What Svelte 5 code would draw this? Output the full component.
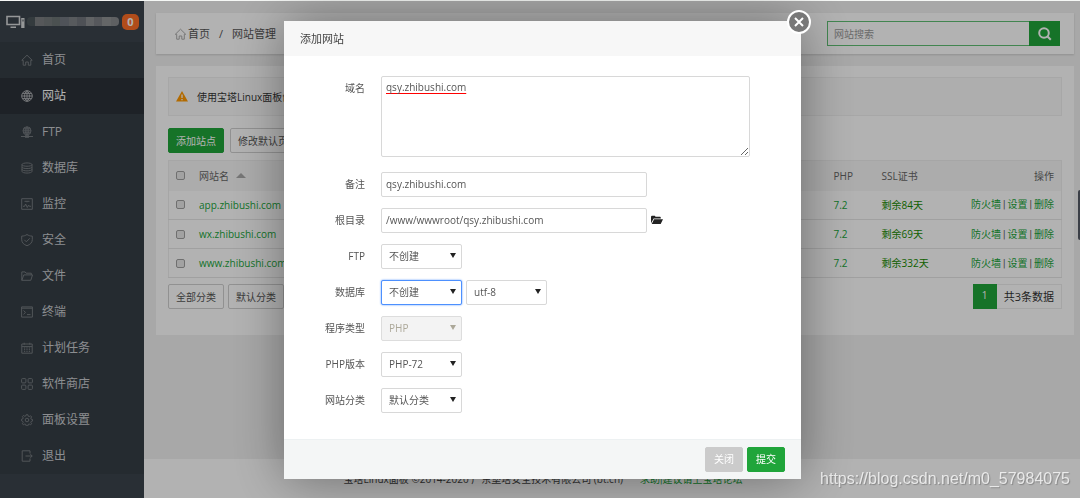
<script lang="ts">
  interface MenuItem {
    name: string;
    icon: string;
    active?: boolean;
  }

  const menu: MenuItem[] = [
    { name: '首页', icon: 'home' },
    { name: '网站', icon: 'site', active: true },
    { name: 'FTP', icon: 'ftp' },
    { name: '数据库', icon: 'database' },
    { name: '监控', icon: 'monitor' },
    { name: '安全', icon: 'shield' },
    { name: '文件', icon: 'folder' },
    { name: '终端', icon: 'terminal' },
    { name: '计划任务', icon: 'calendar' },
    { name: '软件商店', icon: 'store' },
    { name: '面板设置', icon: 'gear' },
    { name: '退出', icon: 'exit' },
  ];

  const icons: Record<string, string> = {
    home: 'M.8 6.3 6 1.2l5.2 5.1H9.8v4.9H7.3V8H4.7v3.2H2.2V6.3z',
    site: 'M6 .7a5.3 5.3 0 1 0 0 10.6A5.3 5.3 0 0 0 6 .7zM6 .7v10.6M.7 6h10.6M1.5 3.4h9M1.5 8.6h9M6 .7C2.7 3 2.7 9 6 11.3 9.3 9 9.3 3 6 .7',
    ftp: 'M6 .8a4 4 0 1 0 0 8 4 4 0 0 0 0-8zM6 .8v8M2 4.8h8M2.6 2.8h6.8M2.6 6.8h6.8M6 .8c-2.3 2-2.3 6 0 8 2.3-2 2.3-6 0-8M0 10.5h12M4 11.3h4M4 9.7h4',
    database: 'M1 2.6C1 .4 11 .4 11 2.6S1 4.8 1 2.6v6.8c0 2.2 10 2.2 10 0V2.6M1 5c0 2.1 10 2.1 10 0M1 7.3c0 2.1 10 2.1 10 0',
    monitor: 'M.7.7h10.6v10.6H.7zM3.5 3.3h5M6 3.3v1M2 8.3h1.6l1-2.3 1.7 3.5 1.3-2.4.8 1.2H10',
    shield: 'M6 .5c1.6 1.1 3.2 1.6 5.3 1.6v3.6c0 2.9-2.1 4.9-5.3 6-3.2-1.1-5.3-3.1-5.3-6V2.1C2.8 2.1 4.4 1.6 6 .5zM3.3 5.8l2 2 3.5-3.5',
    folder: 'M.8 10.3V1.9h3.3l1 1.3h5.2v1.7M.8 10.3l2-5.4h8.7l-1.7 5.4z',
    terminal: 'M.6.9h10.8v10.2H.6zM.6 2.2h10.8M2.5 4.5l2 1.9-2 1.9M6 8.6h3.5',
    calendar: 'M.8 2h10.4v9.2H.8zM.8 4.6h10.4M3.2.7v2M8.8.7v2M3 6h1.2M5.4 6h1.2M7.8 6H9M3 7.7h1.2M5.4 7.7h1.2M7.8 7.7H9M3 9.4h1.2M5.4 9.4h1.2M7.8 9.4H9',
    store: 'M1.5.6H4q.9 0 .9.9V4q0 .9-.9.9H1.5Q.6 4.9.6 4V1.5q0-.9.9-.9zM8 .6h2.5q.9 0 .9.9V4q0 .9-.9.9H8q-.9 0-.9-.9V1.5Q7.1.6 8 .6zM1.5 7.1H4q.9 0 .9.9v2.5q0 .9-.9.9H1.5q-.9 0-.9-.9V8q0-.9.9-.9zM8 7.1h2.5q.9 0 .9.9v2.5q0 .9-.9.9H8q-.9 0-.9-.9V8q0-.9.9-.9z',
    gear: 'M5.2.7h1.6l.4 1.5 1 .4 1.4-.8 1 1-.8 1.4.4 1 1.4.4v1.4l-1.4.4-.4 1 .8 1.4-1 1-1.4-.8-1 .4-.4 1.5H5.2l-.4-1.5-1-.4-1.4.8-1-1 .8-1.4-.4-1L.5 6.7V5.3l1.3-.4.4-1-.8-1.4 1-1 1.4.8 1-.4zM6 4.2a1.8 1.8 0 1 0 0 3.6 1.8 1.8 0 0 0 0-3.6z',
    exit: 'M9 3.5V.8H1.2v10.4H9V8.5M4.5 6h6.7M9.3 4.2 11.2 6 9.3 7.8',
  };

  const mosaic = ['#4b5559', '#7c7f82', '#747a7b', '#6c7575', '#727880', '#7d8286', '#70757b', '#8c8e91', '#7b7f84', '#909294', '#878a8d'];

  const sites = [
    { name: 'app.zhibushi.com', php: '7.2', days: 84 },
    { name: 'wx.zhibushi.com', php: '7.2', days: 69 },
    { name: 'www.zhibushi.com', php: '7.2', days: 332 },
  ];

  let domain = $state('qsy.zhibushi.com');
  let remark = $state('qsy.zhibushi.com');
  let path = $state('/www/wwwroot/qsy.zhibushi.com');
</script>

{#snippet dropdown(id: string, options: string[], disabled = false, focused = false, label = '')}
  <span class="select" class:disabled class:focused>
    <select {id} {disabled} aria-label={label || undefined}>
      {#each options as option}
        <option>{option}</option>
      {/each}
    </select>
  </span>
{/snippet}

<div class="page">
  <aside class="sidebar">
    <div class="server">
      <svg class="server-icon" width="19" height="14" viewBox="0 0 19 14">
        <path d="M1 1.5h12.5v8H1z" fill="none" stroke="#d6d8da" stroke-width="1.6" />
        <path d="M4.5 11.6H10V13H4.5zM15.2 3h3.3v10h-3.3z" fill="#d6d8da" />
        <path d="M17 4.5v2" stroke="#3c444d" />
      </svg>
      <span class="mosaic">
        {#each mosaic as color}
          <i style:background={color}></i>
        {/each}
      </span>
      <span class="badge">0</span>
    </div>
    <nav class="menu">
      {#each menu as item (item.name)}
        <a href="#{item.icon}" class="menu-item" class:active={item.active}>
          <svg width="12" height="12" viewBox="0 0 12 12"><path d={icons[item.icon]} /></svg>
          {item.name}
        </a>
      {/each}
    </nav>
  </aside>

  <div class="main">
    <header class="topbar card">
      <div class="crumbs">
        <a href="#home" class="crumb-home">
          <svg width="13" height="12" viewBox="0 0 12 12"><path d={icons.home} /></svg>首页</a>
        <span>/</span>
        <span>网站管理</span>
      </div>
      <form class="search">
        <input type="text" placeholder="网站搜索" aria-label="网站搜索" />
        <button type="button" aria-label="搜索">
          <svg width="14" height="14" viewBox="0 0 14 14">
            <circle cx="6" cy="6" r="4.8" />
            <path d="m9.5 9.5 3.3 3.3" />
          </svg>
        </button>
      </form>
    </header>

    <section class="content card">
      <div class="notice">
        <svg width="12" height="11" viewBox="0 0 12 11">
          <path d="M6 0 12 10.5H0z" fill="#ff9900" />
          <path d="M6 3.5V7M6 8v1.3" stroke="#fff" stroke-width="1.3" />
        </svg>
        使用宝塔Linux面板创建站点
      </div>

      <div class="toolbar">
        <button type="button" class="btn primary">添加站点</button>
        <button type="button" class="btn">修改默认页</button>
      </div>

      <table class="sites">
        <thead>
          <tr>
            <th class="check"><input type="checkbox" aria-label="全选" /></th>
            <th>网站名 <i class="sort"></i></th>
            <th class="php">PHP</th>
            <th class="ssl">SSL证书</th>
            <th class="ops">操作</th>
          </tr>
        </thead>
        <tbody>
          {#each sites as site (site.name)}
            <tr>
              <td class="check"><input type="checkbox" aria-label={site.name} /></td>
              <td><a href="#site">{site.name}</a></td>
              <td><a href="#php">{site.php}</a></td>
              <td><a href="#ssl" class="ssl-days">剩余{site.days}天</a></td>
              <td class="ops">
                <a href="#firewall">防火墙</a><span class="sep">|</span><a href="#settings">设置</a><span class="sep">|</span><a href="#delete">删除</a>
              </td>
            </tr>
          {/each}
        </tbody>
      </table>

      <div class="table-foot">
        <button type="button" class="btn">全部分类</button>
        <button type="button" class="btn">默认分类</button>
        <div class="pager">
          <span class="current">1</span>
          <span class="total">共3条数据</span>
        </div>
      </div>
    </section>

    <footer class="footer">
      <span>宝塔Linux面板 ©2014-2020 广东堡塔安全技术有限公司 (bt.cn)</span>
      <a href="#forum">求助<span class="bar">|</span>建议请上宝塔论坛</a>
    </footer>
  </div>
</div>

<div class="side-tab"></div>

<div class="overlay">
  <div class="modal" role="dialog" aria-labelledby="modal-title">
    <h2 id="modal-title" class="modal-title">添加网站</h2>
    <button type="button" class="close" aria-label="关闭窗口">
      <svg width="10" height="10" viewBox="0 0 10 10"><path d="m1 1 8 8M9 1 1 9" /></svg>
    </button>

    <form class="form">
      <div class="row tall">
        <label for="domain">域名</label>
        <textarea id="domain" spellcheck="false" bind:value={domain}></textarea>
      </div>
      <div class="row">
        <label for="remark">备注</label>
        <input id="remark" type="text" bind:value={remark} />
      </div>
      <div class="row">
        <label for="path">根目录</label>
        <input id="path" type="text" bind:value={path} />
        <button type="button" class="browse" aria-label="选择目录">
          <svg width="12" height="10" viewBox="0 0 12 10">
            <path d="M0 8.2V1.5L.8.7h3l.8 1h4.6l.6.7v1H2.7zM3.1 4.2H12L9.7 9H.7z" />
          </svg>
        </button>
      </div>
      <div class="row">
        <label for="ftp">FTP</label>
        {@render dropdown('ftp', ['不创建', '创建'])}
      </div>
      <div class="row">
        <label for="database">数据库</label>
        {@render dropdown('database', ['不创建', 'MySQL'], false, true)}
        {@render dropdown('charset', ['utf-8', 'gbk', 'big5'], false, false, '编码')}
      </div>
      <div class="row">
        <label for="type">程序类型</label>
        {@render dropdown('type', ['PHP'], true)}
      </div>
      <div class="row">
        <label for="version">PHP版本</label>
        {@render dropdown('version', ['PHP-72', '纯静态'])}
      </div>
      <div class="row">
        <label for="category">网站分类</label>
        {@render dropdown('category', ['默认分类'])}
      </div>
    </form>

    <div class="modal-foot">
      <button type="button" class="btn muted">关闭</button>
      <button type="button" class="btn primary">提交</button>
    </div>
  </div>
</div>

<div class="watermark">https://blog.csdn.net/m0_57984075</div>

<style>
  :global(body) {
    font: 10px/16px 'Open Sans', 'Noto Sans CJK SC', sans-serif;
    color: #555;
    background: #f1f1f1;
  }

  * {
    box-sizing: border-box;
  }

  a {
    color: #20a53a;
    text-decoration: none;
  }

  button,
  input,
  select,
  textarea {
    margin: 0;
    font: inherit;
    color: inherit;
    outline: none;
  }

  .page {
    display: flex;
    min-height: 100vh;
    border-top: 1px solid #f5f7f5;
  }

  /* sidebar */
  .sidebar {
    flex: 0 0 144px;
    background: #3c444d;
  }

  .server {
    display: flex;
    align-items: center;
    height: 41px;
    padding: 0 5px 0 6px;
  }

  .server-icon {
    flex: none;
  }

  .mosaic {
    display: flex;
    flex: 1;
    height: 9px;
    margin: 0 3px 0 2px;
    border-radius: 4px;
    overflow: hidden;
  }

  .mosaic i {
    flex: 1;
  }

  .badge {
    width: 17px;
    border-radius: 5px;
    background: #fc6d26;
    color: #fff;
    font-size: 11px;
    font-weight: 700;
    text-align: center;
  }

  .menu {
    background: #363e45;
  }

  .menu-item {
    display: flex;
    align-items: center;
    gap: 9px;
    height: 36px;
    padding-left: 21px;
    font-size: 12px;
    color: #c9ccd0;
  }

  .menu-item svg {
    fill: none;
    stroke: #747a7f;
  }

  .menu-item.active {
    background: #2c3138;
    color: #fff;
  }

  .menu-item.active svg {
    stroke: #a9acaf;
  }

  /* page body */
  .main {
    flex: 1;
    display: flex;
    flex-direction: column;
  }

  .card {
    margin: 12px 6px 0 12px;
    background: #fff;
  }

  .topbar {
    display: flex;
    align-items: center;
    justify-content: space-between;
    height: 41px;
    padding: 0 14px 0 18px;
    box-shadow: 0 1px 2px rgba(0, 0, 0, 0.15);
  }

  .crumbs {
    display: flex;
    gap: 9px;
    font-size: 11px;
  }

  .crumb-home {
    display: flex;
    align-items: center;
    gap: 1px;
    color: inherit;
  }

  .crumb-home svg {
    fill: none;
    stroke: #aaa;
  }

  .search {
    display: flex;
  }

  .search input {
    width: 202px;
    height: 25px;
    padding: 0 6px;
    border: 1px solid #5fbf73;
    border-right: 0;
    background: #fff;
  }

  .search input::placeholder {
    color: #999;
  }

  .search button {
    display: grid;
    place-items: center;
    width: 31px;
    padding: 0;
    border: 0;
    background: #20a53a;
  }

  .search svg {
    fill: none;
    stroke: #fff;
    stroke-width: 2;
  }

  .content {
    padding: 11px 12px 26px;
  }

  .notice {
    display: flex;
    align-items: center;
    gap: 9px;
    height: 39px;
    padding-left: 7px;
    border: 1px solid #f0f0f0;
    background: #fafafa;
    color: #333;
  }

  .toolbar {
    display: flex;
    gap: 6px;
    margin: 12px 0 7px;
  }

  .btn {
    height: 25px;
    padding: 0 7px;
    border: 1px solid #d0d0d0;
    border-radius: 2px;
    background: #fff;
    white-space: nowrap;
  }

  .btn.primary {
    border-color: #20a53a;
    background: #20a53a;
    color: #fff;
  }

  .btn.muted {
    border-color: #cbcbcb;
    background: #cbcbcb;
    color: #fff;
  }

  .sites {
    width: 100%;
    border: 1px solid #eee;
    border-collapse: collapse;
  }

  .sites th,
  .sites td {
    height: 29px;
    padding: 0 7px;
    border-bottom: 1px solid #e6e6e6;
    font-weight: 400;
    text-align: left;
  }

  .sites th {
    height: 30px;
    background: #f6f6f6;
    border-bottom: 0;
    color: #666;
  }

  .sites .check {
    width: 23px;
  }

  .sites .php {
    width: 48px;
  }

  .sites .ssl {
    width: 72px;
  }

  .sites .ops {
    width: 115px;
    text-align: right;
    white-space: nowrap;
  }

  .sep,
  .bar {
    font-family: Roboto, sans-serif;
  }

  .sep {
    padding: 0 2px;
  }

  .sites .ssl-days {
    color: #168a00;
  }

  .check input {
    display: block;
    appearance: none;
    width: 9px;
    height: 9px;
    border: 1px solid #a0a0a0;
    border-radius: 2px;
    background: #e8e8e8;
  }

  .sort {
    display: inline-block;
    margin: 0 0 2px 4px;
    border: solid transparent;
    border-width: 0 5px 5px;
    border-bottom-color: #aaa;
  }

  .table-foot {
    display: flex;
    gap: 4px;
    margin-top: 6px;
  }

  .pager {
    display: flex;
    margin-left: auto;
    line-height: 23px;
    color: #333;
  }

  .pager .current {
    width: 24px;
    background: #20a53a;
    color: #fff;
    text-align: center;
  }

  .pager .total {
    padding: 0 7px;
    border: 1px solid #ececec;
    border-left: 0;
    font-size: 11px;
  }

  .footer {
    display: flex;
    justify-content: center;
    gap: 17px;
    height: 39px;
    margin-top: auto;
    padding-right: 138px;
    background: #fff;
    line-height: 40px;
    color: #444;
  }

  .side-tab {
    position: fixed;
    top: 190px;
    right: 0;
    width: 2px;
    height: 50px;
    border-radius: 2px 0 0 2px;
    background: #555b66;
  }

  /* dialog */
  .overlay {
    position: fixed;
    inset: 1px 0 0;
    display: flex;
    align-items: center;
    justify-content: center;
    padding-left: 5px;
    background: rgba(0, 0, 0, 0.3);
  }

  .modal {
    position: relative;
    width: 517px;
    background: #fff;
    box-shadow: 1px 1px 50px rgba(0, 0, 0, 0.4);
  }

  .modal-title {
    margin: 0;
    padding: 0 16px;
    background: #f7f7f7;
    font-size: 11px;
    font-weight: 400;
    line-height: 35px;
    color: #444;
  }

  .close {
    position: absolute;
    top: -11px;
    right: -10px;
    display: grid;
    place-items: center;
    width: 24px;
    height: 24px;
    padding: 0;
    border: 2px solid #fff;
    border-radius: 50%;
    background: #787878;
  }

  .close svg {
    fill: none;
    stroke: #fff;
    stroke-width: 2;
  }

  .form {
    display: flex;
    flex-direction: column;
    gap: 11px;
    padding: 20px 51px 26px 0;
  }

  .row {
    display: flex;
    align-items: center;
    gap: 4px;
  }

  .row.tall {
    align-items: flex-start;
    padding-bottom: 4px;
  }

  .row label {
    width: 81px;
    margin-right: 12px;
    line-height: 25px;
    text-align: right;
  }

  .row textarea {
    flex: 1;
    height: 81px;
    padding: 2px 4px;
    border: 1px solid #d8d8d8;
    border-radius: 2px;
    text-decoration: underline solid #f00 1px;
    text-decoration-skip-ink: none;
    text-underline-offset: 2px;
  }

  .row input {
    width: 266px;
    height: 25px;
    padding: 0 4px;
    border: 1px solid #d8d8d8;
    border-radius: 2px;
  }

  .browse {
    display: flex;
    padding: 0;
    border: 0;
    background: none;
  }

  .browse svg {
    fill: #222;
  }

  .select {
    display: grid;
    align-items: center;
    width: 81px;
  }

  .select select {
    grid-area: 1 / 1;
    height: 25px;
    padding: 0 7px;
    appearance: none;
    border: 1px solid #d8d8d8;
    border-radius: 2px;
    background: #fff;
    opacity: 1;
  }

  .select::after {
    content: '';
    grid-area: 1 / 1;
    justify-self: end;
    margin: 0 6px 2px 0;
    border: solid transparent;
    border-width: 5px 3px 0;
    border-top-color: #222;
    pointer-events: none;
  }

  .select.focused select {
    border-color: #4d90fe;
    box-shadow: 0 0 2px #4d90fe;
  }

  .select.disabled select {
    border-color: #ddd;
    background: #f3f3f3;
    color: #aca899;
  }

  .select.disabled::after {
    border-top-color: #aca899;
  }

  .modal-foot {
    display: flex;
    justify-content: flex-end;
    gap: 4px;
    padding: 7px 16px;
    border-top: 1px solid #edf1f2;
    background: #f4f6f6;
  }

  .modal-foot .btn {
    padding: 0 8px;
  }

  .watermark {
    position: fixed;
    right: 10px;
    bottom: 10px;
    font: 16px/18px 'Liberation Sans', sans-serif;
    color: rgba(255, 255, 255, 0.75);
    text-shadow: 1px 1px 1px rgba(0, 0, 0, 0.25);
  }
</style>
